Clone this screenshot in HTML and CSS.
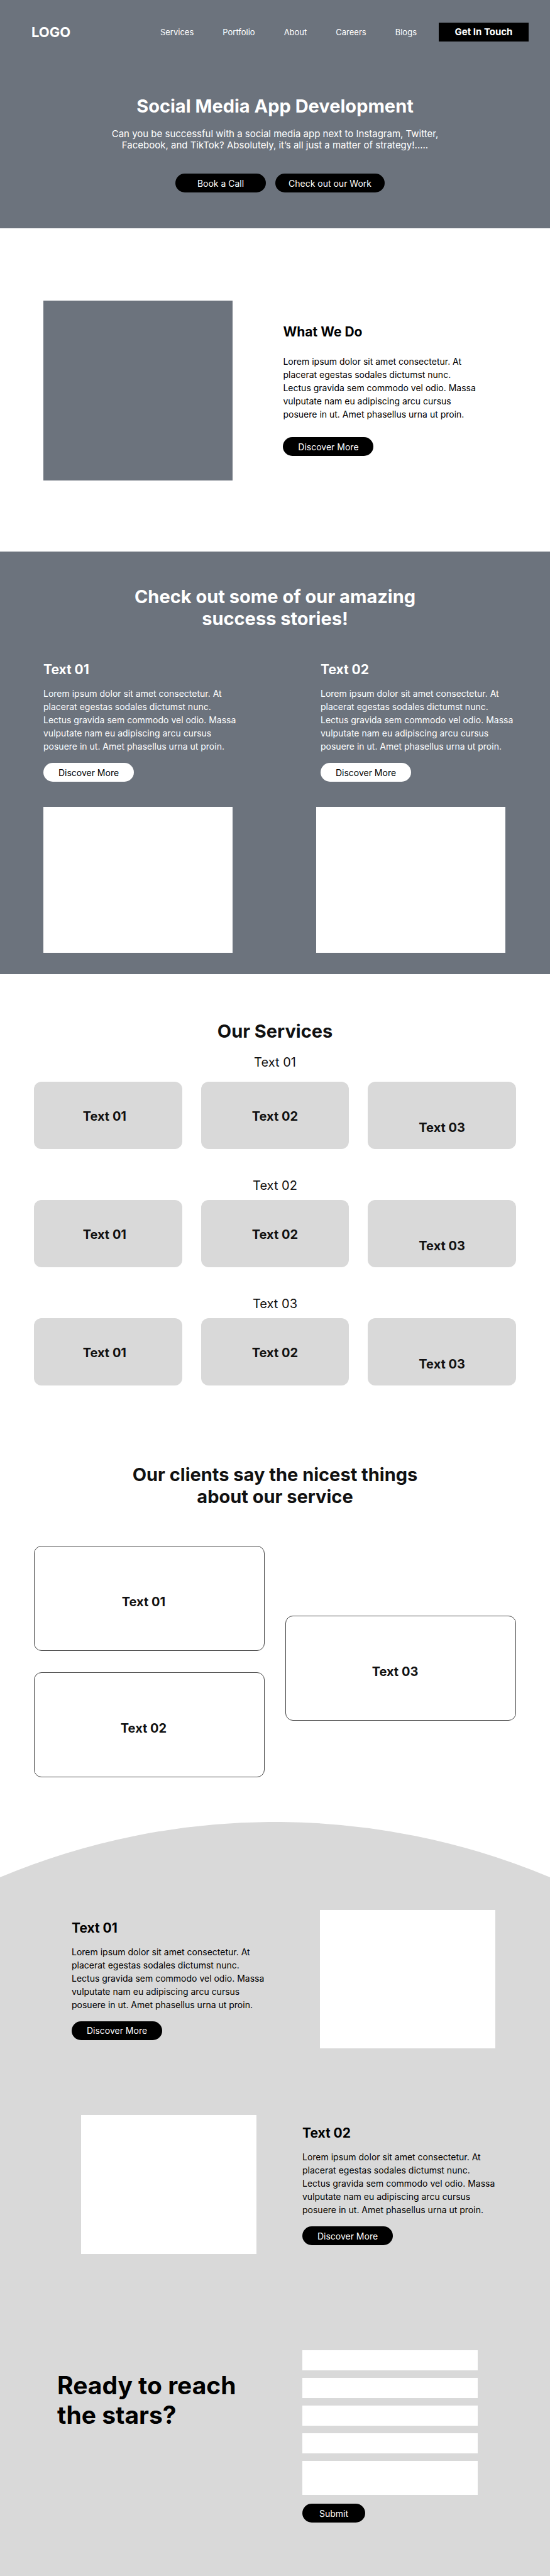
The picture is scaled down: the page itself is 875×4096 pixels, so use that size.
FILE: index.html
```html
<!DOCTYPE html>
<html lang="en">
<head>
<meta charset="utf-8">
<title>Social Media App Development</title>
<link rel="stylesheet" href="styles.css">
</head>
<body>
<header class="hero">
  <div class="topbar">
    <a class="logo" href="#">LOGO</a>
    <nav class="nav">
      <a href="#services">Services</a>
      <a href="#portfolio">Portfolio</a>
      <a href="#about">About</a>
      <a href="#careers">Careers</a>
      <a href="#blogs">Blogs</a>
    </nav>
    <a class="cta" href="#contact">Get In Touch</a>
  </div>
  <h1 class="hero-title">Social Media App Development</h1>
  <p class="hero-text">Can you be successful with a social media app next to Instagram, Twitter, Facebook, and TikTok? Absolutely, it’s all just a matter of strategy!.....</p>
  <div class="hero-actions">
    <button class="pill" type="button">Book a Call</button>
    <button class="pill pill-wide" type="button">Check out our Work</button>
  </div>
</header>

<main>
  <section class="about" id="about">
    <div class="about-media"></div>
    <div class="copy copy-roomy">
      <h2 class="title">What We Do</h2>
      <p class="text">Lorem ipsum dolor sit amet consectetur. At placerat egestas sodales dictumst nunc. Lectus gravida sem commodo vel odio. Massa vulputate nam eu adipiscing arcu cursus posuere in ut. Amet phasellus urna ut proin.</p>
      <button class="pill" type="button">Discover More</button>
    </div>
  </section>

  <section class="stories" id="portfolio">
    <h2 class="heading">Check out some of our amazing success stories!</h2>
    <div class="story-copy">
      <div class="copy">
        <h3 class="title">Text 01</h3>
        <p class="text">Lorem ipsum dolor sit amet consectetur. At placerat egestas sodales dictumst nunc. Lectus gravida sem commodo vel odio. Massa vulputate nam eu adipiscing arcu cursus posuere in ut. Amet phasellus urna ut proin.</p>
        <button class="pill pill-light" type="button">Discover More</button>
      </div>
      <div class="copy">
        <h3 class="title">Text 02</h3>
        <p class="text">Lorem ipsum dolor sit amet consectetur. At placerat egestas sodales dictumst nunc. Lectus gravida sem commodo vel odio. Massa vulputate nam eu adipiscing arcu cursus posuere in ut. Amet phasellus urna ut proin.</p>
        <button class="pill pill-light" type="button">Discover More</button>
      </div>
    </div>
    <div class="story-media">
      <div class="story-image"></div>
      <div class="story-image"></div>
    </div>
  </section>

  <section class="services" id="services">
    <h2 class="heading">Our Services</h2>
    <h3 class="group-label">Text 01</h3>
    <div class="cards cards-first">
      <div class="card card-left">Text 01</div>
      <div class="card">Text 02</div>
      <div class="card card-low">Text 03</div>
    </div>
    <h3 class="group-label">Text 02</h3>
    <div class="cards">
      <div class="card card-left">Text 01</div>
      <div class="card">Text 02</div>
      <div class="card card-low">Text 03</div>
    </div>
    <h3 class="group-label">Text 03</h3>
    <div class="cards">
      <div class="card card-left">Text 01</div>
      <div class="card">Text 02</div>
      <div class="card card-low">Text 03</div>
    </div>
  </section>

  <section class="clients">
    <h2 class="heading">Our clients say the nicest things about our service</h2>
    <div class="quotes">
      <div class="quote-column">
        <div class="quote">Text 01</div>
        <div class="quote">Text 02</div>
      </div>
      <div class="quote-column quote-column-low">
        <div class="quote">Text 03</div>
      </div>
    </div>
  </section>

  <svg class="arc" viewBox="0 0 875 88" preserveAspectRatio="none" aria-hidden="true">
    <path d="M0 88A1131 1131 0 0 1 875 88Z"/>
  </svg>

  <div class="closing">
    <section class="feature feature-text-first" id="careers">
      <div class="copy">
        <h3 class="title">Text 01</h3>
        <p class="text">Lorem ipsum dolor sit amet consectetur. At placerat egestas sodales dictumst nunc. Lectus gravida sem commodo vel odio. Massa vulputate nam eu adipiscing arcu cursus posuere in ut. Amet phasellus urna ut proin.</p>
        <button class="pill" type="button">Discover More</button>
      </div>
      <div class="feature-image"></div>
    </section>
    <section class="feature feature-image-first" id="blogs">
      <div class="feature-image"></div>
      <div class="copy">
        <h3 class="title">Text 02</h3>
        <p class="text">Lorem ipsum dolor sit amet consectetur. At placerat egestas sodales dictumst nunc. Lectus gravida sem commodo vel odio. Massa vulputate nam eu adipiscing arcu cursus posuere in ut. Amet phasellus urna ut proin.</p>
        <button class="pill" type="button">Discover More</button>
      </div>
    </section>
    <section class="contact" id="contact">
      <h2 class="contact-title">Ready to reach the stars?</h2>
      <form class="form">
        <input class="field" type="text" aria-label="First name">
        <input class="field" type="text" aria-label="Last name">
        <input class="field" type="email" aria-label="Email">
        <input class="field" type="tel" aria-label="Phone">
        <textarea class="field field-tall" aria-label="Message"></textarea>
        <button class="pill pill-submit" type="submit">Submit</button>
      </form>
    </section>
  </div>
</main>
</body>
</html>
```

FILE: styles.css
```css
:root {
  --slate: #6c737d;
  --grey: #d9d9d9;
  --ink: #111111;
}

* {
  box-sizing: border-box;
}

body,
h1,
h2,
h3,
p {
  margin: 0;
}

body {
  background: #ffffff;
  color: #000000;
  font-family: Inter, "Liberation Sans", sans-serif;
  font-size: 14px;
}

a {
  color: inherit;
  text-decoration: none;
}

/* Shared pieces */

.pill {
  display: block;
  min-width: 144px;
  height: 30px;
  padding: 0 20px;
  border: 0;
  border-radius: 15px;
  background: #000000;
  color: #ffffff;
  font: inherit;
}

.pill-light {
  background: #ffffff;
  color: #000000;
}

.heading {
  max-width: 480px;
  margin: 0 auto;
  font-size: 29px;
  font-weight: 700;
  line-height: 35px;
  text-align: center;
}

.title {
  font-size: 21px;
  font-weight: 700;
  line-height: 26px;
}

.text {
  max-width: 312px;
  margin: 14px 0 16px;
  line-height: 21px;
}

.copy-roomy {
  padding-top: 37px;
}

.copy-roomy .text {
  margin: 23px 0 26px;
}

/* Hero */

.hero {
  padding: 36px 34px 57px 50px;
  background: var(--slate);
  color: #ffffff;
}

.topbar {
  display: flex;
  align-items: center;
  justify-content: space-between;
}

.logo {
  font-size: 22px;
  font-weight: 700;
}

.nav {
  display: flex;
  gap: 46px;
  margin: 0 35px 0 auto;
  font-size: 13px;
}

.cta {
  width: 143px;
  font-size: 15px;
  font-weight: 700;
  line-height: 30px;
  background: #000000;
  text-align: center;
}

.hero-title {
  margin-top: 85px;
  padding-right: 16px;
  font-size: 29px;
  font-weight: 700;
  line-height: 35px;
  text-align: center;
}

.hero-text {
  max-width: 557px;
  margin: 18px auto 0;
  padding-right: 16px;
  font-size: 15px;
  line-height: 18px;
  text-align: center;
}

.hero-actions {
  display: flex;
  justify-content: center;
  gap: 15px;
  margin-top: 36px;
}

.pill-wide {
  min-width: 174px;
}

/* About */

.about {
  display: grid;
  grid-template-columns: 301fr 345fr;
  column-gap: 80px;
  align-items: start;
  padding: 115px 79px 113px 69px;
}

.about-media {
  aspect-ratio: 301 / 286;
  background: var(--slate);
}

/* Stories */

.stories {
  padding: 54px 0 34px;
  background: var(--slate);
  color: #ffffff;
}

.story-copy {
  display: grid;
  grid-template-columns: 441fr 313fr;
  margin-top: 51px;
  padding: 0 52px 0 69px;
}

.story-media {
  display: flex;
  justify-content: space-between;
  margin-top: 40px;
  padding: 0 71px 0 69px;
}

.story-image {
  width: 41%;
  aspect-ratio: 301 / 231;
  background: #ffffff;
}

/* Services */

.services {
  padding: 73px 54px 0;
  color: var(--ink);
}

.group-label {
  margin-top: 46px;
  font-size: 20px;
  font-weight: 400;
  line-height: 24px;
  text-align: center;
}

.heading + .group-label {
  margin-top: 20px;
}

.cards {
  display: grid;
  grid-template-columns: repeat(3, 1fr);
  gap: 30px;
  margin-top: 11px;
}

.cards-first {
  margin-top: 19px;
}

.card {
  height: 107px;
  padding-top: 43px;
  border-radius: 12px;
  background: var(--grey);
  font-size: 20px;
  font-weight: 700;
  line-height: 24px;
  text-align: center;
}

.card-left {
  padding-right: 11px;
}

.card-low {
  padding-top: 61px;
}

/* Clients */

.clients {
  padding: 124px 54px 71px;
  color: var(--ink);
}

.quotes {
  display: grid;
  grid-template-columns: 1fr 1fr;
  align-items: start;
  gap: 33px;
  margin-top: 61px;
}

.quote-column {
  display: grid;
  gap: 34px;
}

.quote-column-low {
  padding-top: 111px;
}

.quote {
  height: 167px;
  padding: 76px 18px 0 0;
  border: 1px solid #444444;
  border-radius: 12px;
  font-size: 20px;
  font-weight: 700;
  line-height: 24px;
  text-align: center;
}

/* Closing block on the grey hill */

.arc {
  display: block;
  width: 100%;
  height: 88px;
  fill: var(--grey);
}

.closing {
  padding: 52px 55px 85px 91px;
  background: var(--grey);
}

.feature {
  display: grid;
  align-items: start;
}

.feature .copy {
  padding-top: 16px;
}

.feature-image {
  aspect-ratio: 279 / 221;
  background: #ffffff;
}

.feature-text-first {
  grid-template-columns: 396fr 279fr;
  padding: 0 32px 0 23px;
}

.feature-image-first {
  grid-template-columns: 279fr 339fr;
  column-gap: 73px;
  margin-top: 106px;
  padding-left: 38px;
}

.contact {
  display: grid;
  grid-template-columns: 390fr 279fr;
  margin-top: 153px;
  padding-right: 60px;
}

.contact-title {
  max-width: 310px;
  margin-top: 32px;
  font-size: 39px;
  font-weight: 700;
  line-height: 47px;
}

.form {
  display: grid;
  gap: 12px;
}

.field {
  display: block;
  width: 100%;
  height: 32px;
  padding: 0 10px;
  border: 0;
  border-radius: 0;
  background: #ffffff;
  font: inherit;
}

.field-tall {
  height: 54px;
  padding: 8px 10px;
  resize: none;
}

.pill-submit {
  min-width: 100px;
  margin-top: 2px;
  justify-self: start;
}
```
